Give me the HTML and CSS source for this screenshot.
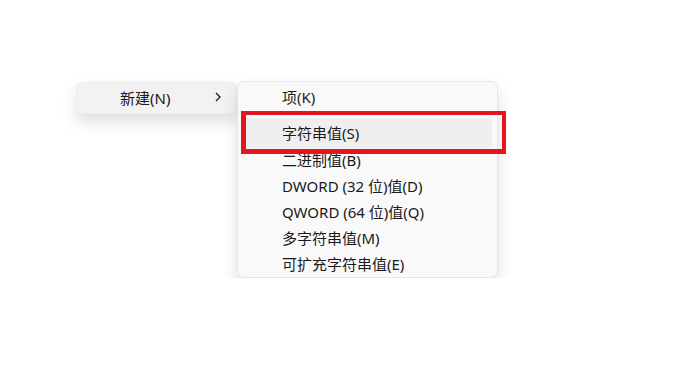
FILE: index.html
```html
<!DOCTYPE html>
<html lang="zh-CN">
<head>
  <meta charset="UTF-8" />
  <title>新建</title>
  <link rel="stylesheet" href="styles.css">
</head>
<body>
  <div class="menus">
    <div class="menu parent">
      <div class="item active">
        <span class="label">新建(N)</span>
        <svg class="chevron" width="8" height="10" viewBox="0 0 8 10"><path d="M2 1 L6 5 L2 9" fill="none" stroke="#1b1b1b" stroke-width="1.3"/></svg>
      </div>
    </div>

    <div class="menu sub">
      <div class="item">项(K)</div>
      <div class="sep"></div>
      <div class="item active">字符串值(S)</div>
      <div class="item">二进制值(B)</div>
      <div class="item">DWORD (32 位)值(D)</div>
      <div class="item">QWORD (64 位)值(Q)</div>
      <div class="item">多字符串值(M)</div>
      <div class="item">可扩充字符串值(E)</div>
      <div class="mark"></div>
    </div>
  </div>
</body>
</html>
```

FILE: styles.css
```css
* {
  box-sizing: border-box;
  margin: 0;
  padding: 0;
}

body {
  background: #ffffff;
  font-family: "Noto Sans", "Noto Sans CJK SC", sans-serif;
  font-size: 15px;
  color: #1a1a1a;
}

.menus {
  display: flex;
  align-items: flex-start;
  padding: 81px 0 0 76px;
}

.menu {
  background: #f9f9f9;
  border: 1px solid #e6e6e6;
  border-radius: 7px;
  box-shadow: 0 8px 16px rgba(0, 0, 0, 0.13);
}

.parent {
  margin-top: 1px;
  width: 161px;
  height: 32px;
  background: #f2f2f2;
  border-color: #ececec;
  border-radius: 6px;
}

.parent .item {
  display: flex;
  align-items: center;
  justify-content: space-between;
  height: 30px;
  padding: 0 14px 2px 43px;
  background: transparent;
}

.chevron {
  display: block;
}

.sub {
  position: relative;
  width: 261px;
  height: 197px;
  padding: 2px 4px 4px;
}

.sub .item {
  height: 26px;
  line-height: 26px;
  padding-left: 40px;
  border-radius: 4px;
}

.sub .item.active {
  height: 30px;
  line-height: 30px;
  margin-top: -3px;
  margin-bottom: -1px;
  margin-right: 1px;
  background: #efefef;
}

.sep {
  height: 11px;
}

.mark {
  position: absolute;
  left: 3px;
  top: 29px;
  width: 265px;
  height: 43px;
  border: 5px solid #e3161d;
  border-right-width: 4px;
  border-top-width: 4px;
}
```
